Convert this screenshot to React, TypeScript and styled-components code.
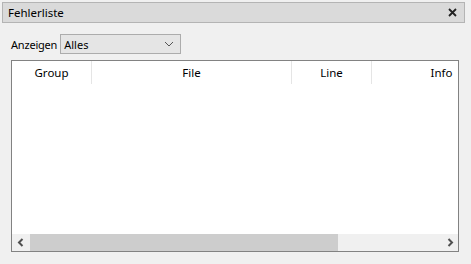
import React from "react";
import styled, { createGlobalStyle } from "styled-components";

const GlobalStyle = createGlobalStyle`
  html, body {
    margin: 0;
    padding: 0;
    background: #f0f0f0;
  }
  body {
    font-family: "Segoe UI", "Noto Sans", "Open Sans", sans-serif;
    font-size: 11.5px;
    color: #000;
  }
`;

const Panel = styled.div`
  width: 471px;
  height: 264px;
  box-sizing: border-box;
  padding: 2px 6px 0 2px;
  display: flex;
  flex-direction: column;
  background: #f0f0f0;
`;

const TitleBar = styled.div`
  height: 21px;
  box-sizing: border-box;
  border: 1px solid #b4b4b4;
  background: #dadada;
  display: flex;
  align-items: center;
  justify-content: space-between;
  padding: 0 6px 0 5px;
`;

const Title = styled.span`
  line-height: 1;
`;

const CloseButton = styled.span`
  display: flex;
  align-items: center;
  justify-content: center;
  width: 12px;
  height: 12px;
`;

const Toolbar = styled.div`
  display: flex;
  align-items: center;
  gap: 3px;
  margin: 11px 0 0 9px;
`;

const Label = styled.span`
  white-space: nowrap;
  font-size: 11px;
  letter-spacing: -0.2px;
`;

const Select = styled.div`
  width: 121px;
  height: 20px;
  box-sizing: border-box;
  border: 1px solid #acacac;
  background: #e5e5e5;
  display: flex;
  align-items: center;
  justify-content: space-between;
  padding: 0 6px 0 3px;
  font-size: 11px;
`;

const Table = styled.div`
  margin: 6px 0 0 9px;
  width: 448px;
  height: 192px;
  box-sizing: border-box;
  border: 1px solid #828282;
  background: #fff;
  display: flex;
  flex-direction: column;
  overflow: hidden;
`;

const HeaderRow = styled.div`
  display: flex;
  height: 23px;
  flex-shrink: 0;
`;

const HeaderCell = styled.div<{ $w: number }>`
  width: ${(p) => p.$w}px;
  flex-shrink: 0;
  box-sizing: border-box;
  border-right: 1px solid #e5e5e5;
  display: flex;
  align-items: center;
  justify-content: center;
`;

const Body = styled.div`
  flex: 1;
`;

const ScrollBar = styled.div`
  height: 17px;
  display: flex;
  align-items: stretch;
  background: #f0f0f0;
`;

const ArrowButton = styled.div`
  width: 17px;
  display: flex;
  align-items: center;
  justify-content: center;
`;

const Track = styled.div`
  flex: 1;
  display: flex;
  align-items: stretch;
  padding: 0 1px;
`;

const Thumb = styled.div<{ $w: number }>`
  width: ${(p) => p.$w}px;
  background: #cdcdcd;
`;

const columns = [
  { name: "Group", width: 80 },
  { name: "File", width: 200 },
  { name: "Line", width: 80 },
  { name: "Info", width: 140 },
];

const Chevron = ({ dir }: { dir: "left" | "right" | "down" }) => {
  if (dir === "down") {
    return (
      <svg width="10" height="6" viewBox="0 0 10 6">
        <path d="M1 1 L5 5 L9 1" fill="none" stroke="#555" strokeWidth="1" />
      </svg>
    );
  }
  const d = dir === "left" ? "M5.5 1 L2 4.5 L5.5 8" : "M2.5 1 L6 4.5 L2.5 8";
  return (
    <svg width="8" height="9" viewBox="0 0 8 9">
      <path d={d} fill="none" stroke="#505050" strokeWidth="2" />
    </svg>
  );
};

export default function App() {
  return (
    <>
      <GlobalStyle />
      <Panel>
        <TitleBar>
          <Title>Fehlerliste</Title>
          <CloseButton>
            <svg width="9" height="9" viewBox="0 0 9 9">
              <path d="M1 1 L8 8 M8 1 L1 8" stroke="#222" strokeWidth="1.8" />
            </svg>
          </CloseButton>
        </TitleBar>
        <Toolbar>
          <Label>Anzeigen</Label>
          <Select>
            <span>Alles</span>
            <Chevron dir="down" />
          </Select>
        </Toolbar>
        <Table>
          <HeaderRow>
            {columns.map((c) => (
              <HeaderCell key={c.name} $w={c.width}>
                {c.name}
              </HeaderCell>
            ))}
          </HeaderRow>
          <Body />
          <ScrollBar>
            <ArrowButton>
              <Chevron dir="left" />
            </ArrowButton>
            <Track>
              <Thumb $w={308} />
            </Track>
            <ArrowButton>
              <Chevron dir="right" />
            </ArrowButton>
          </ScrollBar>
        </Table>
      </Panel>
    </>
  );
}
